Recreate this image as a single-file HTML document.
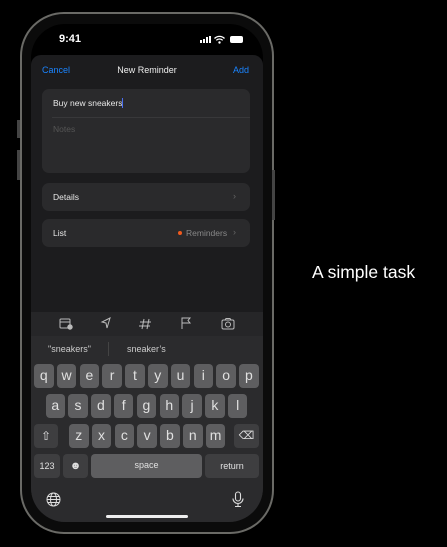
<!DOCTYPE html><html><head><style>
*{margin:0;padding:0;box-sizing:border-box}
body{width:447px;height:547px;background:#000;position:relative;overflow:hidden;font-family:"Liberation Sans",sans-serif;color:#fff}
.a{position:absolute}
.k{position:absolute;height:24px;background:#5e5e60;border-radius:4px;color:#e0e0e0;font-size:14px;text-align:center;line-height:23px}
.d{background:#3e3e40;font-size:9px;line-height:24px}
</style></head><body>
<div class="a" style="left:20px;top:12px;width:254px;height:522px;border:2px solid #6a6a66;border-radius:44px;background:#0b0b0b"></div>
<div class="a" style="left:17px;top:120px;width:3px;height:18px;background:#444"></div>
<div class="a" style="left:17px;top:150px;width:3px;height:30px;background:#444"></div>
<div class="a" style="left:272px;top:170px;width:3px;height:50px;background:#444"></div>
<div class="a" style="left:31px;top:24px;width:232px;height:498px;border-radius:34px;background:#000;overflow:hidden">
 <div class="a" style="left:0;top:0;width:232px;height:40px">
  <div class="a" style="left:28px;top:9px;font-size:11px;font-weight:bold">9:41</div>
  <div class="a" style="left:169px;top:12px;width:11px;height:7px;display:flex;gap:1px;align-items:flex-end"><i style="width:2px;height:3px;background:#fff"></i><i style="width:2px;height:4px;background:#fff"></i><i style="width:2px;height:6px;background:#fff"></i><i style="width:2px;height:7px;background:#fff"></i></div>
  <svg class="a" style="left:183px;top:11px" width="11" height="9" viewBox="0 0 11 9"><path d="M0.5 3.5A7 7 0 0 1 10.5 3.5M2.3 5.3A4.5 4.5 0 0 1 8.7 5.3" stroke="#fff" stroke-width="1.3" fill="none"/><circle cx="5.5" cy="7.5" r="1.2" fill="#fff"/></svg>
  <div class="a" style="left:199px;top:12px;width:13px;height:7px;background:#fff;border-radius:2px"></div>
 </div>
 <div class="a" style="left:0;top:31px;width:232px;height:470px;background:#1c1c1e;border-radius:10px 10px 0 0"></div>
 <div class="a" style="left:11px;top:41px;font-size:9px;color:#1a84ff">Cancel</div>
 <div class="a" style="left:0;width:232px;text-align:center;top:41px;font-size:9px;color:#eee">New Reminder</div>
 <div class="a" style="left:202px;top:41px;font-size:9px;color:#1a84ff">Add</div>
 <div class="a" style="left:11px;top:65px;width:208px;height:84px;background:#2a2a2c;border-radius:7px">
  <div class="a" style="left:11px;top:9px;font-size:8.5px;color:#e8e8e8">Buy new sneakers<span style="display:inline-block;width:1px;height:10px;background:#4a6ef0;vertical-align:-2px"></span></div>
  <div class="a" style="left:10px;top:28px;width:198px;height:1px;background:#38383a"></div>
  <div class="a" style="left:11px;top:35px;font-size:8.5px;color:#555">Notes</div>
 </div>
 <div class="a" style="left:11px;top:159px;width:208px;height:28px;background:#2a2a2c;border-radius:7px">
  <div class="a" style="left:11px;top:9px;font-size:8.5px;color:#e8e8e8">Details</div>
  <div class="a" style="left:191px;top:8px;font-size:9px;color:#666">›</div>
 </div>
 <div class="a" style="left:11px;top:195px;width:208px;height:28px;background:#2a2a2c;border-radius:7px">
  <div class="a" style="left:11px;top:9px;font-size:8.5px;color:#e8e8e8">List</div>
  <div class="a" style="left:136px;top:12px;width:4px;height:4px;border-radius:50%;background:#f05a1e"></div>
  <div class="a" style="left:144px;top:9px;font-size:8.5px;color:#888">Reminders</div>
  <div class="a" style="left:191px;top:8px;font-size:9px;color:#666">›</div>
 </div>
 <div class="a" style="left:0;top:288px;width:232px;height:210px;background:#2b2b2d"></div>
 <div class="a" style="left:0;top:288px;width:232px;height:24px;background:#262628"></div>
 <svg class="a" style="left:0;top:288px" width="232" height="24" viewBox="0 0 232 24" fill="none" stroke="#bbb" stroke-width="1">
  <rect x="29" y="7" width="10" height="9" rx="1"/><path d="M29 10H39"/><circle cx="39" cy="15" r="2.2" fill="#bbb"/>
  <path d="M79 6L71 10L75 11L76 16Z"/>
  <path d="M113 7L111 17M118 7L116 17M109 10H120M108 14H119"/>
  <path d="M151 17V6H159L157 8.5L159 11H151"/>
  <rect x="191" y="8" width="12" height="9" rx="1.5"/><circle cx="197" cy="12.5" r="2.5"/><path d="M194 8L195 6.5H199L200 8"/>
 </svg>
 <div class="a" style="left:17px;top:320px;font-size:9px;color:#ccc">"sneakers"</div>
 <div class="a" style="left:77px;top:318px;width:1px;height:14px;background:#444"></div>
 <div class="a" style="left:96px;top:320px;font-size:9px;color:#ccc">sneaker’s</div>
</div>
<div id="kb"></div>
<div class="k d" style="left:34px;top:424px;width:24px;font-size:12px">⇧</div>
<div class="k d" style="left:234px;top:424px;width:25px;font-size:11px">⌫</div>
<div class="k d" style="left:34px;top:454px;width:26px">123</div>
<div class="k d" style="left:63px;top:454px;width:25px;font-size:11px">☻</div>
<div class="k" style="left:91px;top:454px;width:111px;font-size:9px">space</div>
<div class="k d" style="left:205px;top:454px;width:54px">return</div>
<svg class="a" style="left:46px;top:492px" width="15" height="15" viewBox="0 0 15 15" fill="none" stroke="#ddd" stroke-width="1"><circle cx="7.5" cy="7.5" r="6.5"/><ellipse cx="7.5" cy="7.5" rx="3" ry="6.5"/><path d="M1 7.5H14M2 4.5H13M2 10.5H13"/></svg>
<svg class="a" style="left:232px;top:491px" width="12" height="17" viewBox="0 0 12 17" fill="none" stroke="#ddd" stroke-width="1.1"><rect x="3.5" y="1" width="5" height="9" rx="2.5"/><path d="M1 7.5A5 5 0 0 0 11 7.5M6 12.5V15.5M3 15.5H9"/></svg>
<div class="a" style="left:106px;top:515px;width:82px;height:3px;border-radius:2px;background:#eee"></div>
<div class="a" style="left:312px;top:262px;font-size:17.5px;color:#fff">A simple task</div>
<script>
var kb=document.getElementById('kb'),h='';
function row(s,x0,y){for(var i=0;i<s.length;i++)h+='<div class="k" style="left:'+(x0+i*22.8)+'px;top:'+y+'px;width:19.5px">'+s[i]+'</div>';}
row('qwertyuiop',34,364);row('asdfghjkl',45.5,394);row('zxcvbnm',69,424);
kb.innerHTML=h;
</script>
</body></html>
